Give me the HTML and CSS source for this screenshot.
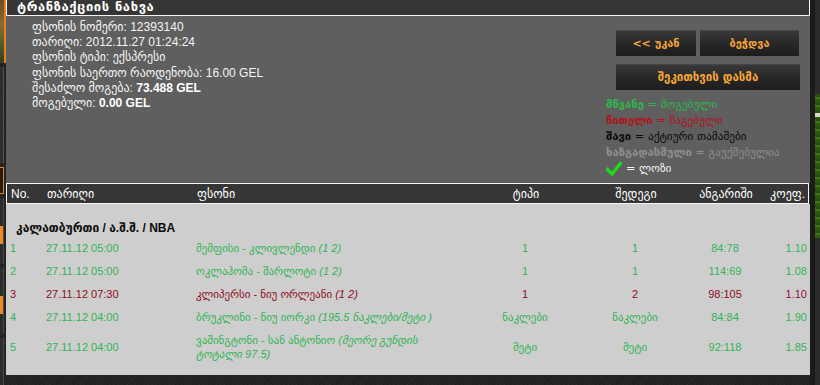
FILE: index.html
```html
<!DOCTYPE html>
<html lang="ka">
<head>
<meta charset="utf-8">
<title>ტრანზაქციის ნახვა</title>
<link rel="stylesheet" href="styles.css">
</head>
<body>
<div class="page">
  <aside class="edge-left">
    <div class="el-photo"></div>
    <div class="el-box"></div>
    <div class="el-frame"></div>
    <div class="el-tab"><span class="el-mark"></span></div>
    <div class="el-tab"><span class="el-mark"></span></div>
    <div class="el-tab"></div>
  </aside>

  <main class="panel">
    <div class="title">ტრანზაქციის ნახვა</div>

    <section class="summary">
      <div class="info">
        <div>ფსონის ნომერი: 12393140</div>
        <div>თარიღი: 2012.11.27 01:24:24</div>
        <div>ფსონის ტიპი: ექსპრესი</div>
        <div>ფსონის საერთო რაოდენობა: 16.00 GEL</div>
        <div>შესაძლო მოგება: <b>73.488 GEL</b></div>
        <div>მოგებული: <b>0.00 GEL</b></div>
      </div>

      <div class="side">
        <div class="btn-row">
          <button class="btn btn-back">&lt;&lt; უკან</button>
          <button class="btn btn-print">ბეჭდვა</button>
        </div>
        <button class="btn btn-ask">შეკითხვის დასმა</button>
        <ul class="legend">
          <li class="lg-green"><b>მწვანე</b> = მოგებული</li>
          <li class="lg-red"><b>წითელი</b> = წაგებული</li>
          <li class="lg-black"><b>შავი</b> = აქტიური თამაშები</li>
          <li class="lg-gray"><b>ხაზგადასმული</b> = გაუქმებულია</li>
          <li class="lg-check">
            <svg class="check" viewBox="0 0 16 16" width="16" height="16"><path d="M1.5 8.5 L6 13 L14.5 2.5" fill="none" stroke="#1fd81f" stroke-width="3.4" stroke-linecap="square"/></svg>
            = ლოზი
          </li>
        </ul>
      </div>
    </section>

    <div class="thead grid">
      <span class="c-no">No.</span>
      <span>თარიღი</span>
      <span>ფსონი</span>
      <span class="c-mid">ტიპი</span>
      <span class="c-mid">შედეგი</span>
      <span class="c-mid">ანგარიში</span>
      <span class="c-end">კოეფ.</span>
    </div>

    <div class="tbody">
      <div class="category">კალათბურთი / ა.შ.შ. / NBA</div>

      <div class="row grid win">
        <span class="c-no">1</span>
        <span>27.11.12 05:00</span>
        <span class="c-ev">მემფისი - კლივლენდი <i>(1 2)</i></span>
        <span class="c-mid">1</span>
        <span class="c-mid">1</span>
        <span class="c-mid">84:78</span>
        <span class="c-end">1.10</span>
      </div>
      <div class="row grid win">
        <span class="c-no">2</span>
        <span>27.11.12 05:00</span>
        <span class="c-ev">ოკლაჰომა - შარლოტი <i>(1 2)</i></span>
        <span class="c-mid">1</span>
        <span class="c-mid">1</span>
        <span class="c-mid">114:69</span>
        <span class="c-end">1.08</span>
      </div>
      <div class="row grid lose">
        <span class="c-no">3</span>
        <span>27.11.12 07:30</span>
        <span class="c-ev">კლიპერსი - ნიუ ორლეანი <i>(1 2)</i></span>
        <span class="c-mid">1</span>
        <span class="c-mid">2</span>
        <span class="c-mid">98:105</span>
        <span class="c-end c-coef">1.10</span>
      </div>
      <div class="row grid win">
        <span class="c-no">4</span>
        <span>27.11.12 04:00</span>
        <span class="c-ev">ბრუკლინი - ნიუ იორკი <i>(195.5 ნაკლები/მეტი )</i></span>
        <span class="c-mid">ნაკლები</span>
        <span class="c-mid">ნაკლები</span>
        <span class="c-mid">84:84</span>
        <span class="c-end">1.90</span>
      </div>
      <div class="row grid win tall">
        <span class="c-no">5</span>
        <span>27.11.12 04:00</span>
        <span class="c-ev">ვაშინგტონი - სან ანტონიო <i>(მეორე გუნდის<br>ტოტალი 97.5)</i></span>
        <span class="c-mid">მეტი</span>
        <span class="c-mid">მეტი</span>
        <span class="c-mid">92:118</span>
        <span class="c-end">1.85</span>
      </div>
    </div>
  </main>

  <aside class="edge-right">
    <div class="er-col">
      <div class="er-thumb"></div>
    </div>
  </aside>
</div>
</body>
</html>
```

FILE: styles.css
```css
* { box-sizing: border-box; }

html, body {
  margin: 0;
  padding: 0;
}

body {
  background-color: #242424;
  background-image:
    repeating-linear-gradient(45deg, rgba(255,255,255,0.025) 0 1px, transparent 1px 3px),
    repeating-linear-gradient(-45deg, rgba(0,0,0,0.18) 0 1px, transparent 1px 3px);
  font-family: "Liberation Sans", "DejaVu Sans", Arial, sans-serif;
  font-size: 12px;
  color: #fff;
  overflow: hidden;
}

.page {
  display: flex;
  align-items: flex-start;
  width: 820px;
  height: 385px;
}

/* ---------- left edge (page behind the dialog) ---------- */
.edge-left {
  width: 6px;
  flex: none;
  display: flex;
  flex-direction: column;
  gap: 4px;
}
.el-photo {
  height: 63px;
  border-right: 2px solid #e8801e;
  background: linear-gradient(#6b4a26, #8c6a2e 40%, #4f5e2b 70%, #3e3a22);
}
.el-box {
  height: 96px;
  width: 4px;
  background: #2e2e2e;
  border-right: 1px solid #555;
}
.el-frame {
  height: 27px;
  width: 4px;
  background: #1e1e1e;
  border: 1px solid #e8801e;
  border-left: none;
}
.el-tab {
  height: 66px;
  width: 4px;
  background: #2c2c2c;
  border-right: 1px solid #4a4a4a;
  padding-top: 28px;
}
.el-mark {
  display: block;
  width: 3px;
  height: 18px;
  background: #f08a1e;
}

/* ---------- right edge ---------- */
.edge-right {
  width: 10px;
  flex: none;
  height: 385px;
  display: flex;
  justify-content: flex-end;
  background: #1b1b1b;
}
.er-col {
  width: 5px;
  height: 385px;
  background: #2a2a2a;
  padding-top: 94px;
}
.er-thumb {
  height: 144px;
  background:
    linear-gradient(transparent 19px, #d8d8c8 19px, #d8d8c8 23px, transparent 23px),
    repeating-linear-gradient(0deg, #2f5a12 0 3px, #3f7418 3px 5px, #284d0e 5px 8px);
}

/* ---------- main panel ---------- */
.panel {
  width: 804px;
  flex: none;
  display: flex;
  flex-direction: column;
}

.title {
  height: 16px;
  background: #363636;
  border: 1px solid #f4f4f4;
  border-top: none;
  padding-left: 10px;
  font-family: "DejaVu Sans", sans-serif;
  font-weight: bold;
  font-size: 13px;
  letter-spacing: 0.6px;
  line-height: 14px;
  color: #fff;
  white-space: nowrap;
}

.summary {
  background: #5f5f5f;
  height: 167px;
  display: flex;
  justify-content: space-between;
}

.info {
  padding: 4px 0 0 26px;
  font-size: 12px;
  line-height: 15.2px;
  color: #f4f4f4;
}
.info div { white-space: nowrap; }
.info b { font-weight: bold; color: #fff; }

.side {
  width: 204px;
  padding: 14px 10px 0 0;
  display: flex;
  flex-direction: column;
}

.btn-row {
  display: flex;
  gap: 4px;
  margin-left: 10px;
}

.btn {
  height: 26px;
  border: none;
  border-radius: 1px;
  background: linear-gradient(#3a3a3a, #282828 50%, #1d1d1d);
  box-shadow: inset 0 1px 0 rgba(255,255,255,0.05);
  color: #f6a53a;
  font-family: "DejaVu Sans", sans-serif;
  font-weight: bold;
  font-size: 11px;
  padding: 0;
  cursor: pointer;
}
.btn-back { width: 80px; }
.btn-print { width: 99px; }
.btn-ask {
  width: 184px;
  margin: 8px 0 0 10px;
  font-size: 11.5px;
}

.legend {
  list-style: none;
  margin: 7px 0 0 0;
  padding: 0;
  font-family: "DejaVu Sans", sans-serif;
  font-size: 11.3px;
  line-height: 16px;
}
.legend li { white-space: nowrap; }
.lg-green { color: #2db84d; }
.lg-red { color: #b3111a; }
.lg-black { color: #0a0a0a; }
.lg-gray { color: #8f8f8f; }
.lg-check {
  color: #f4f4f4;
  display: flex;
  align-items: center;
  gap: 4px;
}
.check { display: block; }

/* ---------- table ---------- */
.grid {
  display: grid;
  grid-template-columns: 40px 150px 274px 110px 110px 70px 1fr;
  align-items: center;
}

.thead {
  height: 21px;
  width: 803px;
  background: #363636;
  border: 1px solid #f4f4f4;
  color: #fff;
  font-size: 12px;
  font-family: "Liberation Sans", "DejaVu Sans", sans-serif;
}
.thead span { white-space: nowrap; }

.c-no { padding-left: 4px; }
.c-mid { text-align: center; }
.c-end { text-align: right; padding-right: 3px; }

.tbody {
  background: #cecece;
  padding: 16px 0 9px;
  font-size: 11px;
}

.category {
  height: 16px;
  line-height: 16px;
  padding-left: 10px;
  font-weight: bold;
  color: #0c0c0c;
  font-size: 12px;
}

.row {
  height: 23px;
  line-height: 14px;
}
.row.tall { height: 38px; }
.row span { white-space: nowrap; }
.row i { font-style: italic; }

.win { color: #2fb553; }
.lose { color: #8c0f1c; }
.lose .c-coef { color: #8e0a50; }
```
